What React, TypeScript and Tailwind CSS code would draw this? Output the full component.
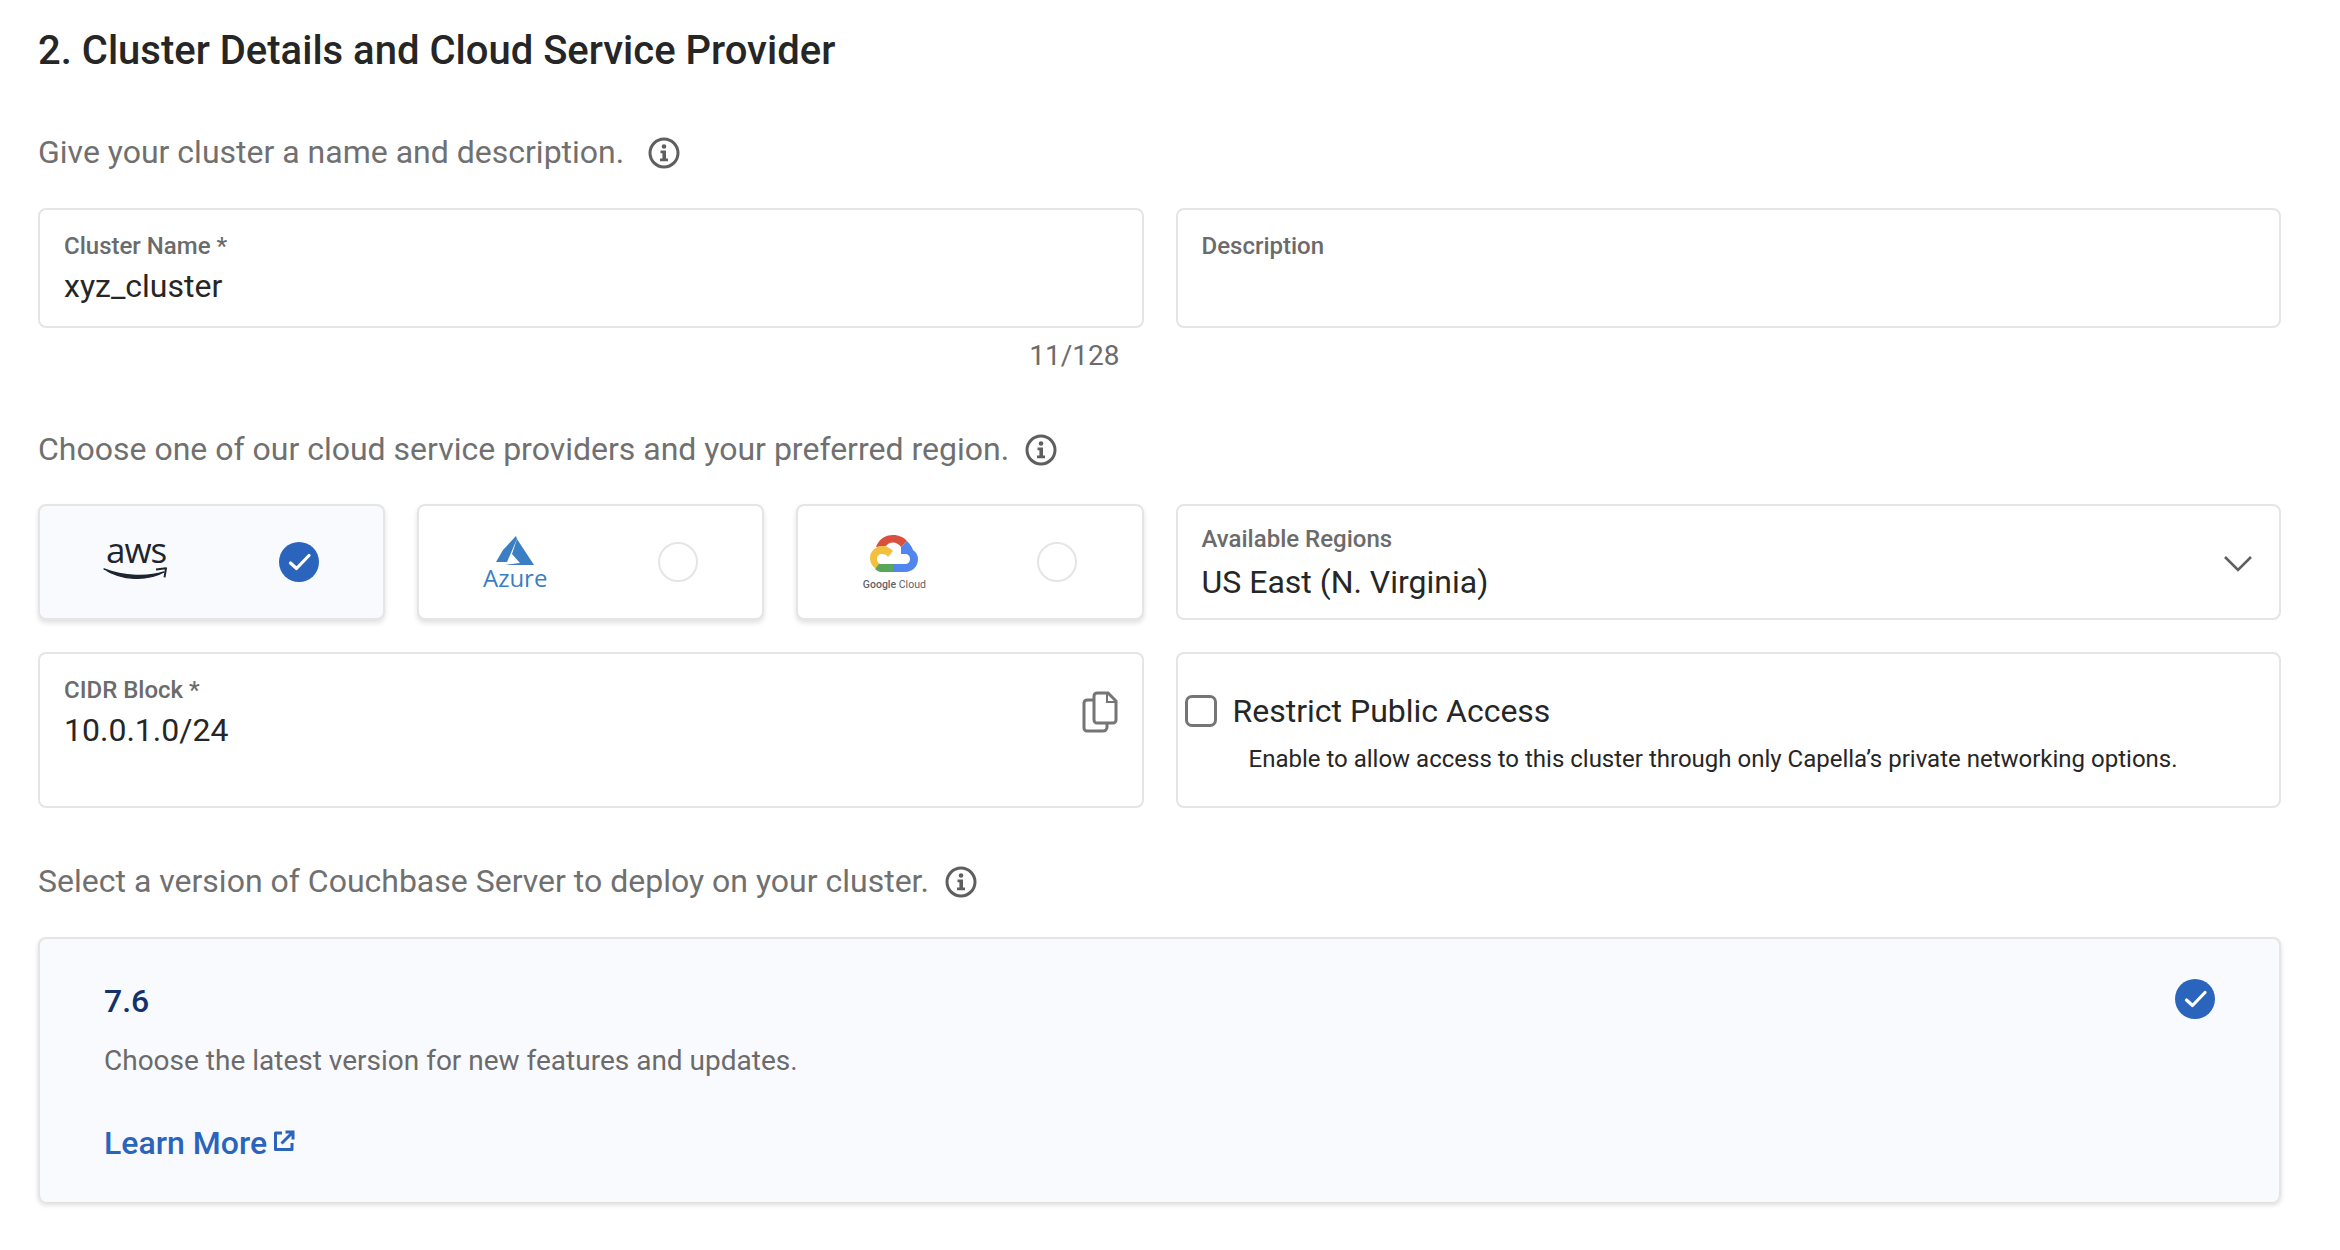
function InfoIcon() {
  return (
    <svg width="32" height="32" viewBox="0 0 32 32" fill="none" className="shrink-0 mt-[1px]">
      <circle cx="16" cy="16" r="14" stroke="#5f5f5f" strokeWidth="3" />
      <circle cx="16" cy="9.500" r="2.300" fill="#5f5f5f" />
      <path d="M12.500 13.500h5.500v8h2v2.800h-8v-2.800h2.400v-5.200h-1.900z" fill="#5f5f5f" />
    </svg>
  );
}

function CheckCircle() {
  return (
    <svg width="40" height="40" viewBox="0 0 40 40" className="shrink-0">
      <circle cx="20" cy="20" r="20" fill="#2a64bc" />
      <path d="M11.500 21l6 5.500L30 13.500" fill="none" stroke="#fff" strokeWidth="3.200" strokeLinecap="round" strokeLinejoin="round" />
    </svg>
  );
}

function SectionLabel({ text, wide }: { text: string; wide?: boolean }) {
  return (
    <div className={`flex items-center h-[40px] ${wide ? 'gap-[24px]' : 'gap-[16px]'}`}>
      <span className="text-[32px] leading-[40px] text-[#707070]">{text}</span>
      <InfoIcon />
    </div>
  );
}

function AwsLogo() {
  return (
    <div className="relative w-[66px] h-[44px]">
      <span className="absolute left-[3px] top-[-12px] text-[35px] leading-[44px] tracking-[-1px] text-[#1c2530] font-['Open_Sans',sans-serif]">aws</span>
      <svg width="66" height="16" viewBox="0 0 66 16" className="absolute left-0 top-[26px]">
        <path d="M1 3c18 12 44 12 60 3 -15 5-40 5-60-3z" fill="#1c2530" stroke="#1c2530" strokeWidth="1.400" strokeLinejoin="round" />
        <path d="M53 3.500l10-1.200-1.500 9" fill="none" stroke="#1c2530" strokeWidth="2" strokeLinejoin="round" />
      </svg>
    </div>
  );
}

function AzureLogo() {
  return (
    <div className="flex flex-col items-center w-[66px]">
      <svg width="38" height="30" viewBox="0 0 38 30">
        <path d="M20 0L7 14 0 26h11L21 3z" fill="#3a7ec4" />
        <path d="M21 3l17 26H9l15-2-8-9z" fill="#3a7ec4" />
      </svg>
      <span className="text-[24px] leading-[22px] mt-[1px] text-[#3a7ec4] font-['Open_Sans',sans-serif]">Azure</span>
    </div>
  );
}

function GoogleLogo() {
  return (
    <div className="flex flex-col items-center w-[66px]">
      <svg width="50" height="40" viewBox="0 0 50 40">
        <path d="M7 13C10 5 16 1 24 1c6 0 11 2.500 14 6l-6 6c-2-3-5-4.500-8-4.500-3 0-5 1-7 3.500z" fill="#d9503f" />
        <path d="M38 7c3 3 5 6 6 9 3 2 5 5 5 9 0 8-6 13-13 13H24v-8h12c3 0 5-2 5-5s-2-5-5-5h-4v-1c0-3 0-5 0-6z" fill="#5086ee" />
        <path d="M24 30v8H12l3-8z" fill="#58a65c" />
        <path d="M6 34c-3-2-5-6-5-10 0-7 6-12 12-12 5 0 8 2 11 5l-5 6c-1-2-3-3-6-3-3 0-5 2-5 5 0 2 1 4 3 5l-1 5z" fill="#f3c03d" />
        <path d="M10 30l5 0 0 8h-3c-2 0-4-1-6-3z" fill="#58a65c" />
      </svg>
      <span className="text-[10.500px] leading-[12px] mt-[5px] text-[#5f6368] font-['Roboto',sans-serif] whitespace-nowrap">
        <span className="font-medium">Google</span> Cloud
      </span>
    </div>
  );
}

function ProviderCard({ logo, selected }: { logo: React.ReactNode; selected?: boolean }) {
  return (
    <div
      className={`flex flex-1 items-center h-[116px] pl-[63px] rounded-[8px] border-2 border-[#e5e5e5] shadow-[0_3px_5px_rgba(0,0,0,0.12)] ${
        selected ? 'bg-[#f9fafe]' : 'bg-white'
      }`}
    >
      <div className="w-[66px] flex justify-center">{logo}</div>
      <div className="ml-[110px]">
        {selected ? <CheckCircle /> : <div className="w-[40px] h-[40px] rounded-full border-2 border-[#e5e5e5]" />}
      </div>
    </div>
  );
}

export default function App() {
  return (
    <div className="w-[2340px] h-[1250px] bg-white overflow-hidden pl-[38px] pt-[26px] font-['Roboto',sans-serif]">
      <div className="w-[2243px]">
        <h2 className="text-[40px] leading-[50px] font-medium text-[#262626]">
          2. Cluster Details and Cloud Service Provider
        </h2>

        <div className="mt-[56px]">
          <SectionLabel text="Give your cluster a name and description." wide />
        </div>

        <div className="mt-[36px] grid grid-cols-2 gap-[32px]">
          <div>
            <div className="h-[120px] rounded-[8px] border-2 border-[#e5e5e5] px-[24px] pt-[22px]">
              <div className="text-[24px] leading-[28px] font-medium text-[#6b6b6b]">Cluster Name *</div>
              <div className="mt-[6px] text-[32px] leading-[40px] text-[#262626]">xyz_cluster</div>
            </div>
            <div className="mt-[12px] pr-[24px] text-right text-[28px] leading-[32px] text-[#6b6b6b]">11/128</div>
          </div>
          <div className="h-[120px] rounded-[8px] border-2 border-[#e5e5e5] px-[24px] pt-[22px]">
            <div className="text-[24px] leading-[28px] font-medium text-[#6b6b6b]">Description</div>
          </div>
        </div>

        <div className="mt-[57px]">
          <SectionLabel text="Choose one of our cloud service providers and your preferred region." />
        </div>

        <div className="mt-[35px] grid grid-cols-2 gap-[32px]">
          <div className="flex gap-[32px]">
            <ProviderCard logo={<AwsLogo />} selected />
            <ProviderCard logo={<AzureLogo />} />
            <ProviderCard logo={<GoogleLogo />} />
          </div>
          <div className="h-[116px] flex items-center justify-between rounded-[8px] border-2 border-[#e5e5e5] pl-[24px] pr-[26px]">
            <div className="mt-[2px]">
              <div className="text-[24px] leading-[28px] font-medium text-[#6b6b6b]">Available Regions</div>
              <div className="mt-[9px] text-[32px] leading-[40px] text-[#262626]">US East (N. Virginia)</div>
            </div>
            <svg width="30" height="18" viewBox="0 0 30 18" fill="none" className="mt-[2px]">
              <path d="M2 3l13 13L28 3" stroke="#5f5f5f" strokeWidth="2.600" />
            </svg>
          </div>
        </div>

        <div className="mt-[32px] grid grid-cols-2 gap-[32px]">
          <div className="h-[156px] flex justify-between rounded-[8px] border-2 border-[#e5e5e5] px-[24px] pt-[22px]">
            <div>
              <div className="text-[24px] leading-[28px] font-medium text-[#6b6b6b]">CIDR Block *</div>
              <div className="mt-[6px] text-[32px] leading-[40px] text-[#262626]">10.0.1.0/24</div>
            </div>
            <svg width="36" height="42" viewBox="0 0 36 42" fill="none" className="mt-[15px]">
              <path d="M25 32v4a4 4 0 0 1-4 4H5a3 3 0 0 1-3-3V12a3 3 0 0 1 3-3h6" stroke="#757575" strokeWidth="3" />
              <path d="M15 2h11l8 8v19a3 3 0 0 1-3 3H15a3 3 0 0 1-3-3V5a3 3 0 0 1 3-3z" stroke="#757575" strokeWidth="3" />
              <path d="M25 2v9h9" stroke="#757575" strokeWidth="2" />
            </svg>
          </div>
          <div className="h-[156px] rounded-[8px] border-2 border-[#e5e5e5] pl-[7px] pt-[37px]">
            <div className="flex items-center gap-[16px] h-[40px]">
              <div className="w-[32px] h-[32px] rounded-[7px] border-[3.500px] border-[#757575]" />
              <span className="text-[32px] leading-[40px] text-[#262626]">Restrict Public Access</span>
            </div>
            <div className="mt-[12px] ml-[64px] text-[24px] leading-[32px] text-[#262626]">
              Enable to allow access to this cluster through only Capella’s private networking options.
            </div>
          </div>
        </div>

        <div className="mt-[53px]">
          <SectionLabel text="Select a version of Couchbase Server to deploy on your cluster." />
        </div>

        <div className="mt-[36px] h-[265px] flex justify-between rounded-[8px] border-2 border-[#e5e5e5] border-b-0 bg-[#f9fafe] shadow-[0_3px_5px_rgba(0,0,0,0.14)] pl-[64px] pr-[64px] pt-[40px]">
          <div className="mt-[2px]">
            <div className="text-[32px] leading-[40px] font-medium text-[#12326b]">7.6</div>
            <div className="mt-[20px] text-[28px] leading-[40px] text-[#6b6b6b]">Choose the latest version for new features and updates.</div>
            <a href="#" className="mt-[41px] flex items-center gap-[6px] text-[32px] leading-[42px] font-medium text-[#2a64bc]">
              Learn More
              <svg width="22" height="22" viewBox="0 0 22 22" fill="none" className="mb-[4px]">
                <path d="M9 3H2.500v16.500H19V13" stroke="#2a64bc" strokeWidth="3" strokeLinejoin="round" />
                <path d="M8.500 13.500L19.500 2.500M12.500 2H20v7.500" stroke="#2a64bc" strokeWidth="3" />
              </svg>
            </a>
          </div>
          <CheckCircle />
        </div>
      </div>
    </div>
  );
}
